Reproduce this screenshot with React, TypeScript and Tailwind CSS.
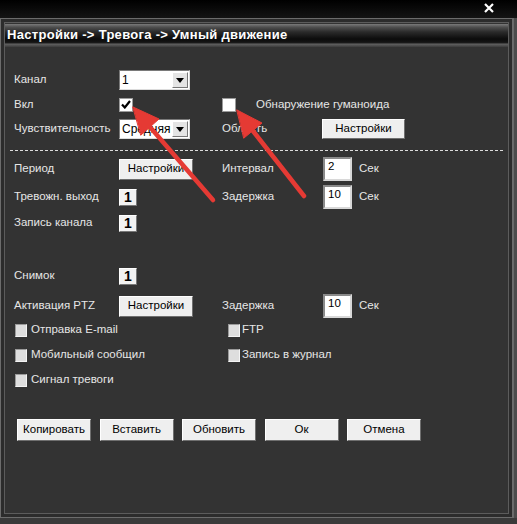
import React from 'react';

function Btn({ children, w }: { children: React.ReactNode; w: string }) {
  return (
    <div
      className={`${w} flex items-center justify-center bg-[#efefef] border border-t-[#ffffff] border-l-[#ffffff] border-r-[#6f6f6f] border-b-[#6f6f6f] text-[11.5px] text-black leading-none`}
    >
      {children}
    </div>
  );
}

function Select({ value }: { value: string }) {
  return (
    <div className="w-[71px] h-[20px] bg-white border border-t-[#7a7a7a] border-l-[#7a7a7a] border-r-[#dcdcdc] border-b-[#dcdcdc] flex items-center justify-between pl-[2px] pr-[1px]">
      <span className="text-[12px] text-black leading-none">{value}</span>
      <div className="w-[16px] h-[16px] bg-[#e4e4e4] border border-t-white border-l-white border-r-[#777] border-b-[#777] flex items-center justify-center">
        <svg width="8" height="5" viewBox="0 0 8 5">
          <path d="M0 0 H8 L4 5 Z" fill="#000" />
        </svg>
      </div>
    </div>
  );
}

function NumBox({ value }: { value: string }) {
  return (
    <div className="w-[18px] h-[17px] bg-[#f2f2f2] border border-t-white border-l-white border-r-[#777] border-b-[#777] flex items-center justify-center text-[14px] font-bold text-black leading-none">
      {value}
    </div>
  );
}

function Field({ value }: { value: string }) {
  return (
    <div className="w-[29px] h-[24px] bg-white border-2 border-t-[#8a8a8a] border-l-[#8a8a8a] border-r-[#d8d8d8] border-b-[#d8d8d8] pl-[3px] pt-[2px] text-[11.5px] text-black leading-none">
      {value}
    </div>
  );
}

function WhiteCheck({ checked }: { checked?: boolean }) {
  return (
    <div className="w-[14px] h-[14px] bg-white border border-[#9a9a9a] flex items-center justify-center">
      {checked && (
        <svg width="10" height="9" viewBox="0 0 10 9">
          <path d="M1 4.5 L3.8 7.5 L9 1" stroke="#000" strokeWidth="2.2" fill="none" />
        </svg>
      )}
    </div>
  );
}

function GrayBox() {
  return (
    <div className="w-[12px] h-[13px] bg-[#dedede] border border-t-[#9a9a9a] border-l-[#9a9a9a] border-r-[#f4f4f4] border-b-[#f4f4f4]" />
  );
}

function GrayCheck({ label, gap = 'ml-[4px]' }: { label: string; gap?: string }) {
  return (
    <div className="flex items-center">
      <GrayBox />
      <span className={gap}>{label}</span>
    </div>
  );
}

export default function App() {
  return (
    <div className="relative w-[517px] h-[524px] bg-[#3a3a3a] overflow-hidden font-['Liberation_Sans',Arial,sans-serif] text-[11.5px] text-[#e6e6e6]">
      {/* top bar */}
      <div className="h-[18px] bg-[linear-gradient(#000000,#141414)] flex items-start justify-end pr-[23px] pt-[3px]">
        <svg width="10" height="10" viewBox="0 0 10 10">
          <path d="M1 1 L9 9 M9 1 L1 9" stroke="#fff" strokeWidth="2.2" />
        </svg>
      </div>

      <div className="flex">
        <div className="w-[513px] h-[500px] bg-[#2c2c2c] border border-[#6c6c6c] p-[3px]">
          <div className="h-full bg-[#333333] border border-[#5c5c5c]">
            {/* title band */}
            <div className="mt-[1px] h-[23px] bg-[linear-gradient(#7a7a7a_0%,#4e4e4e_14%,#2a2a2a_35%,#0c0c0c_65%,#141414_80%,#5e5e5e_88%,#3c3c3c_100%)] flex items-center pl-[2px] pb-[1px]">
              <span className="text-[13px] font-bold text-white tracking-[0.3px]">
                Настройки -&gt; Тревога -&gt; Умный движение
              </span>
            </div>

            <div className="pl-[9px] pt-[21px]">
              {/* Канал */}
              <div className="h-[24px] flex items-center">
                <span className="w-[105px]">Канал</span>
                <Select value="1" />
              </div>
              {/* Вкл */}
              <div className="h-[25px] flex items-center">
                <span className="w-[105px]">Вкл</span>
                <div className="w-[103px]">
                  <WhiteCheck checked />
                </div>
                <WhiteCheck />
                <span className="ml-[20px]">Обнаружение гуманоида</span>
              </div>
              {/* Чувствительность */}
              <div className="h-[24px] flex items-center">
                <span className="w-[105px]">Чувствительность</span>
                <div className="w-[103px]">
                  <Select value="Средняя" />
                </div>
                <span className="w-[100px]">Область</span>
                <Btn w="w-[83px] h-[20px]">Настройки</Btn>
              </div>

              {/* dashed separator */}
              <div className="h-[14px] pt-[9px] -ml-[4px]">
                <div className="w-[493px] h-px bg-[repeating-linear-gradient(90deg,#dcdcdc_0px,#dcdcdc_3px,transparent_3px,transparent_5px)]" />
              </div>

              {/* Период */}
              <div className="h-[28px] flex items-center">
                <span className="w-[105px]">Период</span>
                <div className="w-[103px]">
                  <Btn w="w-[74px] h-[21px]">Настройки</Btn>
                </div>
                <span className="w-[101px]">Интервал</span>
                <Field value="2" />
                <span className="ml-[7px]">Сек</span>
              </div>
              {/* Тревожн. выход */}
              <div className="h-[28px] flex items-center">
                <span className="w-[105px]">Тревожн. выход</span>
                <div className="w-[103px]">
                  <NumBox value="1" />
                </div>
                <span className="w-[101px]">Задержка</span>
                <Field value="10" />
                <span className="ml-[7px]">Сек</span>
              </div>
              {/* Запись канала */}
              <div className="h-[24px] flex items-center">
                <span className="w-[105px]">Запись канала</span>
                <NumBox value="1" />
              </div>

              <div className="h-[28px]" />

              {/* Снимок */}
              <div className="h-[26px] flex items-center">
                <span className="w-[105px]">Снимок</span>
                <NumBox value="1" />
              </div>
              {/* Активация PTZ */}
              <div className="h-[28px] pt-[6px] flex items-center">
                <span className="w-[105px]">Активация PTZ</span>
                <div className="w-[103px]">
                  <Btn w="w-[74px] h-[21px]">Настройки</Btn>
                </div>
                <span className="w-[101px]">Задержка</span>
                <Field value="10" />
                <span className="ml-[7px]">Сек</span>
              </div>

              {/* notifications */}
              <div className="h-[26px] flex items-center pl-[1px]">
                <div className="w-[213px]">
                  <GrayCheck label="Отправка E-mail" />
                </div>
                <GrayCheck label="FTP" gap="ml-[2px]" />
              </div>
              <div className="h-[24px] flex items-center pl-[1px]">
                <div className="w-[213px]">
                  <GrayCheck label="Мобильный сообщил" />
                </div>
                <GrayCheck label="Запись в журнал" gap="ml-[2px]" />
              </div>
              <div className="h-[26px] flex items-center pl-[1px]">
                <GrayCheck label="Сигнал тревоги" />
              </div>

              {/* action buttons */}
              <div className="mt-[26px] flex gap-[8.5px] pl-[3px]">
                <Btn w="w-[74px] h-[22px]">Копировать</Btn>
                <Btn w="w-[74px] h-[22px]">Вставить</Btn>
                <Btn w="w-[74px] h-[22px]">Обновить</Btn>
                <Btn w="w-[74px] h-[22px]">Ок</Btn>
                <Btn w="w-[74px] h-[22px]">Отмена</Btn>
              </div>
            </div>
          </div>
        </div>
        <div className="w-[4px] h-[500px] bg-[#4c4c4c] border-l border-[#6a6a6a]" />
      </div>

      {/* annotation arrows */}
      <svg className="absolute inset-0 pointer-events-none" width="517" height="524" viewBox="0 0 517 524">
        <g fill="#e53a34" stroke="#e53a34" strokeLinecap="round">
          <line x1="213" y1="200" x2="150" y2="127" strokeWidth="4.5" />
          <polygon points="133,107 159,119 141,135" strokeWidth="1" strokeLinejoin="round" />
          <line x1="304" y1="196" x2="253" y2="131" strokeWidth="4.5" />
          <polygon points="237,110 262,123 244,138" strokeWidth="1" strokeLinejoin="round" />
        </g>
      </svg>
    </div>
  );
}
